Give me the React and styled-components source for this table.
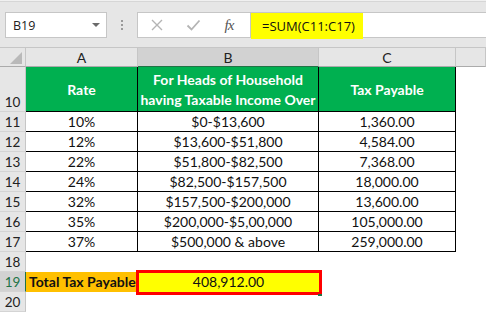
import { Fragment } from 'react';
import styled, { createGlobalStyle, css } from 'styled-components';

const GlobalStyle = createGlobalStyle`
  html, body {
    margin: 0;
    padding: 0;
    background: #ffffff;
  }
  * {
    box-sizing: border-box;
  }
`;

const cellFont = `'Lato', 'Open Sans', sans-serif`;
const uiFont = `'Open Sans', 'Noto Sans', sans-serif`;

const Page = styled.div`
  width: 486px;
  height: 312px;
  overflow: hidden;
  background: #ffffff;
`;

const Toolbar = styled.div`
  height: 47px;
  display: flex;
  align-items: flex-start;
  padding-top: 11px;
  background: #e6e6e6;
  border-top: 1px solid #f0f0f0;
  box-shadow: inset 0 1px 0 #d6d6d6;
`;

const NameBox = styled.div`
  position: relative;
  margin-left: 5px;
  width: 102px;
  height: 26px;
  display: flex;
  align-items: center;
  padding-left: 7px;
  background: #ffffff;
  border: 1px solid #c6c6c6;
  font-family: ${uiFont};
  font-size: 12.5px;
  color: #222222;
`;

const DropArrow = styled.span`
  margin-left: auto;
  margin-right: 6px;
  width: 0;
  height: 0;
  border-left: 4px solid transparent;
  border-right: 4px solid transparent;
  border-top: 4px solid #6a6a6a;
`;

const Grip = styled.div`
  width: 30px;
  height: 26px;
  display: flex;
  flex-direction: column;
  align-items: center;
  justify-content: center;
  gap: 2px;

  span {
    width: 2px;
    height: 2px;
    background: #9a9a9a;
  }
`;

const FormulaBar = styled.div`
  flex: 1;
  height: 26px;
  display: flex;
  align-items: flex-start;
  background: #ffffff;
  border: 1px solid #c6c6c6;
  border-right: none;
`;

const Actions = styled.div`
  width: 113px;
  height: 24px;
  display: flex;
  align-items: center;
  border-right: 1px solid #c6c6c6;
`;

const ActionIcon = styled.span`
  width: ${p => p.$w}px;
  display: flex;
  justify-content: center;
`;

const Fx = styled.span`
  width: ${p => p.$w}px;
  text-align: center;
  font-family: 'Liberation Serif', serif;
  font-style: italic;
  font-size: 15px;
  color: #555555;
  letter-spacing: -1px;
`;

const FormulaText = styled.div`
  width: 112px;
  height: 26px;
  padding-left: 11px;
  display: flex;
  align-items: center;
  background: #ffff00;
  font-family: ${uiFont};
  font-size: 13px;
  color: #111111;
`;

const Sheet = styled.div`
  display: grid;
  grid-template-columns: 26px 112px 181px 137px 1fr;
  grid-template-rows: 20px 45px repeat(10, 20px);
`;

const Corner = styled.div`
  background: #e6e6e6;
  border-top: 1px solid #c6c6c6;
  border-right: 1px solid #c6c6c6;
  border-bottom: 1px solid #ababab;
  display: flex;
  align-items: flex-end;
  justify-content: flex-end;
  padding: 0 3px 2px 0;
`;

const ColHeader = styled.div`
  display: flex;
  align-items: center;
  justify-content: center;
  font-family: ${cellFont};
  font-size: 14px;
  color: #222222;
  background: ${p => (p.$selected ? '#d2d2d2' : '#e6e6e6')};
  border-top: 1px solid #c6c6c6;
  border-right: 1px solid #c6c6c6;
  border-bottom: 1px solid ${p => (p.$selected ? '#217346' : '#ababab')};
`;

const RowHeader = styled.div`
  display: flex;
  align-items: flex-end;
  justify-content: center;
  padding-bottom: 1px;
  font-family: ${cellFont};
  font-size: 13.5px;
  background: ${p => (p.$selected ? '#d2d2d2' : '#e6e6e6')};
  color: ${p => (p.$selected ? '#217346' : '#222222')};
  border-right: 1px solid ${p => (p.$selected ? '#217346' : '#c6c6c6')};
  border-bottom: 1px solid #d4d4d4;
`;

const fills = {
  green: '#00b050',
  orange: '#ffc000',
  yellow: '#ffff00',
  none: '#ffffff',
};

const Cell = styled.div`
  position: relative;
  display: flex;
  align-items: center;
  justify-content: ${p => (p.$left ? 'flex-start' : 'center')};
  padding: ${p => (p.$left ? '0 0 0 3px' : '0')};
  text-align: center;
  white-space: nowrap;
  font-family: ${cellFont};
  font-size: 14px;
  line-height: 20px;
  font-weight: ${p => (p.$bold ? 700 : 400)};
  color: ${p => (p.$fill === 'green' ? '#ffffff' : '#111111')};
  background: ${p => fills[p.$fill || 'none']};
  ${p =>
    p.$bordered &&
    css`
      border-right: 1px solid #000000;
      border-bottom: 1px solid #000000;
    `}
  ${p =>
    p.$bordered &&
    p.$fill === 'green' &&
    css`
      padding-top: 1px;
    `}
`;

const ActiveCell = styled(Cell)`
  z-index: 1;

  &::before {
    content: '';
    position: absolute;
    top: -2px;
    left: -2px;
    right: -3px;
    bottom: -3px;
    border: 3px solid #ff0000;
  }

  &::after {
    content: '';
    position: absolute;
    right: -3px;
    bottom: -4px;
    width: 4px;
    height: 2px;
    background: #217346;
  }
`;

const CloseIcon = () => (
  <svg width="14" height="14" viewBox="0 0 14 14">
    <path d="M2 2 L12 12 M12 2 L2 12" stroke="#b4b4b4" strokeWidth="1.4" fill="none" />
  </svg>
);

const CheckIcon = () => (
  <svg width="15" height="12" viewBox="0 0 15 12">
    <path d="M1.5 6.5 L5.5 10.5 L13.5 1.5" stroke="#b4b4b4" strokeWidth="1.8" fill="none" />
  </svg>
);

const CornerTriangle = () => (
  <svg width="12" height="12" viewBox="0 0 12 12">
    <polygon points="12,0 12,12 0,12" fill="#b9b9b9" />
  </svg>
);

const brackets = [
  ['10%', '$0-$13,600', '1,360.00'],
  ['12%', '$13,600-$51,800', '4,584.00'],
  ['22%', '$51,800-$82,500', '7,368.00'],
  ['24%', '$82,500-$157,500', '18,000.00'],
  ['32%', '$157,500-$200,000', '13,600.00'],
  ['35%', '$200,000-$5,00,000', '105,000.00'],
  ['37%', '$500,000 & above', '259,000.00'],
];

const BlankRow = ({ n }) => (
  <>
    <RowHeader>{n}</RowHeader>
    <Cell />
    <Cell />
    <Cell />
    <Cell />
  </>
);

const App = () => (
  <Page>
    <GlobalStyle />
    <Toolbar>
      <NameBox>
        B19
        <DropArrow />
      </NameBox>
      <Grip>
        <span />
        <span />
        <span />
      </Grip>
      <FormulaBar>
        <Actions>
          <ActionIcon $w={38}>
            <CloseIcon />
          </ActionIcon>
          <ActionIcon $w={34}>
            <CheckIcon />
          </ActionIcon>
          <Fx $w={38}>fx</Fx>
        </Actions>
        <FormulaText>=SUM(C11:C17)</FormulaText>
      </FormulaBar>
    </Toolbar>

    <Sheet>
      <Corner>
        <CornerTriangle />
      </Corner>
      <ColHeader>A</ColHeader>
      <ColHeader $selected>B</ColHeader>
      <ColHeader>C</ColHeader>
      <ColHeader />

      <RowHeader>10</RowHeader>
      <Cell $fill="green" $bold $bordered>Rate</Cell>
      <Cell $fill="green" $bold $bordered>
        For Heads of Household
        <br />
        having Taxable Income Over
      </Cell>
      <Cell $fill="green" $bold $bordered>Tax Payable</Cell>
      <Cell />

      {brackets.map(([rate, range, tax], i) => (
        <Fragment key={rate}>
          <RowHeader>{11 + i}</RowHeader>
          <Cell $bordered>{rate}</Cell>
          <Cell $bordered>{range}</Cell>
          <Cell $bordered>{tax}</Cell>
          <Cell />
        </Fragment>
      ))}

      <BlankRow n={18} />

      <RowHeader $selected>19</RowHeader>
      <Cell $fill="orange" $bold $left>Total Tax Payable</Cell>
      <ActiveCell $fill="yellow">408,912.00</ActiveCell>
      <Cell />
      <Cell />

      <BlankRow n={20} />
    </Sheet>
  </Page>
);

export default App;
